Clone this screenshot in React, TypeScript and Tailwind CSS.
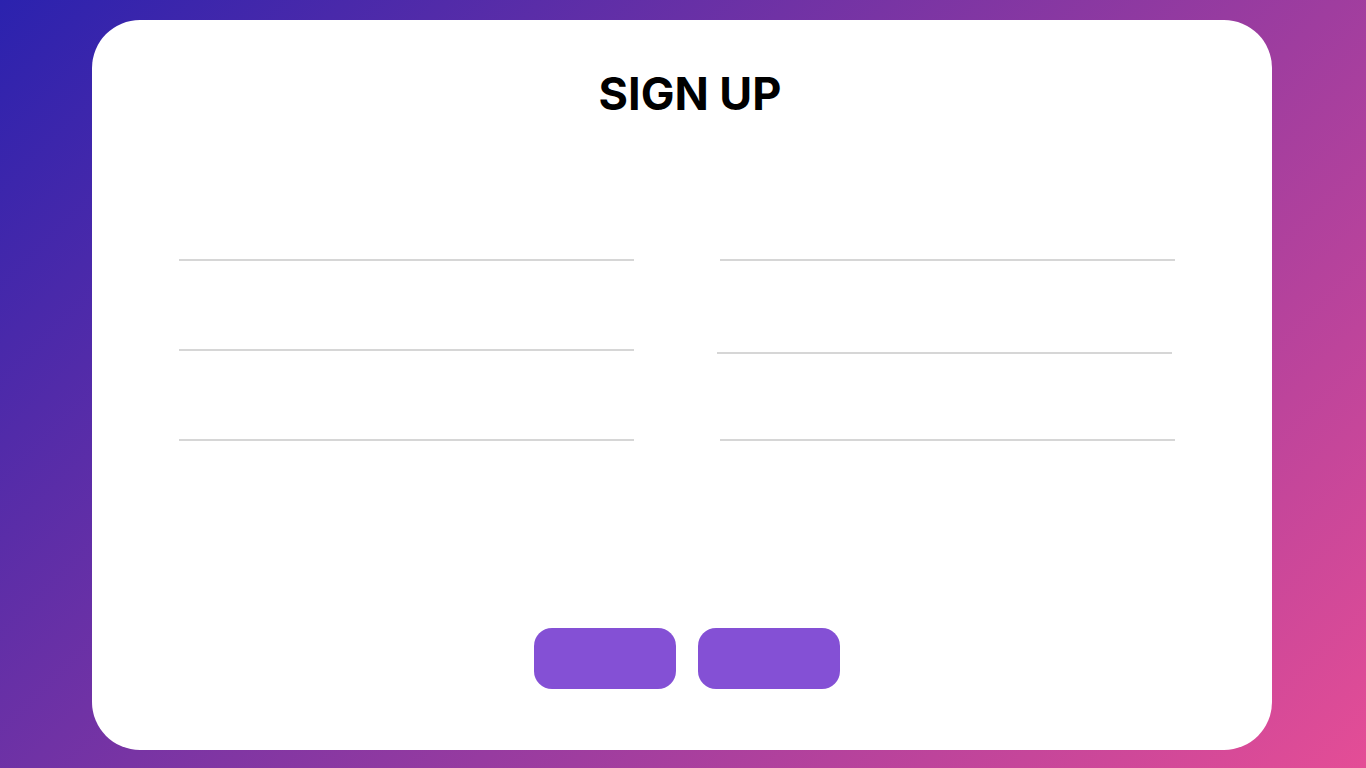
import { useState } from 'react';

const FIELDS = ['firstName', 'lastName', 'email', 'phone', 'password', 'confirm'];

export default function App() {
  const [values, setValues] = useState<Record<string, string>>({});

  return (
    <div className="min-h-screen w-full bg-[linear-gradient(135deg,#2b22ae,#e44d96)] pt-[20px] pb-[18px] pl-[92px] font-['Inter',sans-serif]">
      <div className="flex h-[730px] w-[1180px] flex-col rounded-[48px] bg-white">
        {/* Title */}
        <h1 className="pt-[51px] pl-[16px] text-center text-[45px] leading-[45px] font-bold text-black">
          SIGN UP
        </h1>

        {/* Fields */}
        <div className="mt-[55px] grid grid-cols-2 gap-x-[86px] pl-[87px] pr-[97px]">
          {FIELDS.map((name, i) => (
            <input
              key={name}
              type="text"
              value={values[name] ?? ''}
              onChange={e => setValues(prev => ({ ...prev, [name]: e.target.value }))}
              className={`h-[90px] border-b-2 border-[#d6d6d6] bg-transparent text-base outline-none ${
                i === 3 ? 'relative -left-[3px] top-[3px]' : ''
              }`}
            />
          ))}
        </div>

        {/* Actions */}
        <div className="mt-[187px] flex justify-center gap-[22px] pl-[9px]">
          <button className="h-[61px] w-[142px] rounded-[18px] bg-[#8450d5]" />
          <button className="h-[61px] w-[142px] rounded-[18px] bg-[#8450d5]" />
        </div>
      </div>
    </div>
  );
}
